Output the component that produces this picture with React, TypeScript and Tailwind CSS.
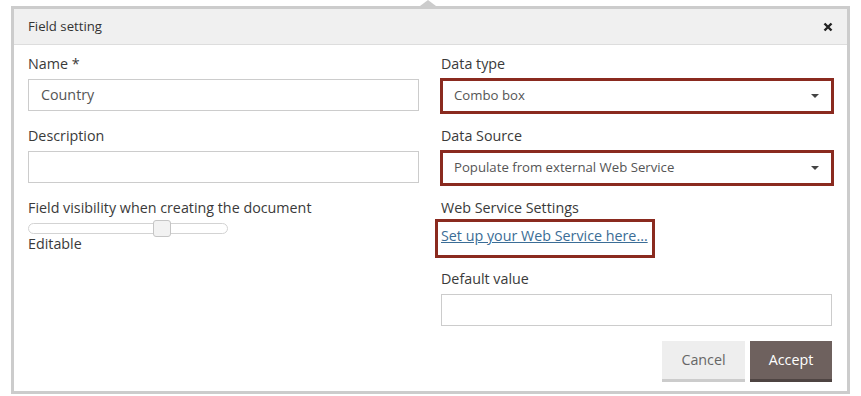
const Label = ({ children }: { children: string }) => (
  <div className="text-[14.3px] leading-[20px] text-[#3a3a3a]">{children}</div>
);

const TextInput = ({ value }: { value?: string }) => (
  <div className="mt-[5px] h-[32px] border border-[#ccc] bg-white px-[12px] text-[14.3px] leading-[30px] text-[#555]">
    {value}
  </div>
);

const Select = ({ value }: { value: string }) => (
  <div className="mt-[4px] flex h-[36px] w-[394px] -ml-[1px] items-center justify-between border-[3px] border-[#8a2a1f] bg-white pl-[11px] pr-[12px] text-[13.2px] text-[#555]">
    <span>{value}</span>
    <svg width="8" height="4" viewBox="0 0 8 4">
      <path d="M0 0h8L4 4z" fill="#444" />
    </svg>
  </div>
);

export default function App() {
  return (
    <div className="h-[396px] w-[861px] bg-white font-['Open_Sans',sans-serif]">
      <div className="relative ml-[11px] h-[6px] w-[839px]">
        {/* arrow notch on top of the dialog */}
        <div className="absolute left-[409px] top-0 h-0 w-0 border-x-[8px] border-b-[6px] border-x-transparent border-b-[#ccc]" />
      </div>
      <div className="ml-[11px] flex h-[388px] w-[839px] flex-col border-[3px] border-[#ccc] bg-white">
        <div className="flex h-[36px] items-center justify-between border-b border-[#ddd] bg-[#f0f0f0] pl-[14px] pr-[14px]">
          <span className="text-[13.2px] text-[#333]">Field setting</span>
          <svg width="10" height="10" viewBox="0 0 10 10">
            <path d="M1.5 1.5l7 7M8.5 1.5l-7 7" stroke="#222" strokeWidth="2.4" />
          </svg>
        </div>
        <div className="grid flex-1 grid-cols-2 gap-x-[22px] pl-[14px] pr-[15px] pt-[9px]">
          <div className="flex flex-col">
            <Label>Name *</Label>
            <TextInput value="Country" />
            <div className="mt-[15px]">
              <Label>Description</Label>
            </div>
            <TextInput />
            <div className="mt-[15px]">
              <Label>Field visibility when creating the document</Label>
            </div>
            <div className="relative mt-[5px] h-[11px] w-[200px] rounded-full border border-[#d3d3d3] bg-white">
              <div className="absolute left-[124px] top-[-4px] h-[17px] w-[18px] rounded-[3px] border border-[#c5c5c5] bg-[#f2f2f2]" />
            </div>
            <Label>Editable</Label>
          </div>
          <div className="flex flex-col">
            <Label>Data type</Label>
            <Select value="Combo box" />
            <div className="mt-[12px]">
              <Label>Data Source</Label>
            </div>
            <Select value="Populate from external Web Service" />
            <div className="mt-[12px]">
              <Label>Web Service Settings</Label>
            </div>
            <div className="-ml-[6px] mt-[1px] flex h-[39px] w-[220px] items-start border-[3px] border-[#8a2a1f] pl-[3px] pt-[4px]">
              <a href="#" className="text-[14.3px] leading-[20px] text-[#3b6d96] underline">
                Set up your Web Service here...
              </a>
            </div>
            <div className="mt-[11px]">
              <Label>Default value</Label>
            </div>
            <TextInput />
            <div className="mt-[15px] flex justify-end gap-[5px]">
              <button className="h-[41px] w-[83px] border-b-[3px] border-[#ccc] bg-[#eee] text-[14.3px] text-[#666]">
                Cancel
              </button>
              <button className="h-[41px] w-[82px] border-b-[3px] border-[#4e4442] bg-[#6e615e] text-[14.3px] text-white">
                Accept
              </button>
            </div>
          </div>
        </div>
      </div>
    </div>
  );
}
